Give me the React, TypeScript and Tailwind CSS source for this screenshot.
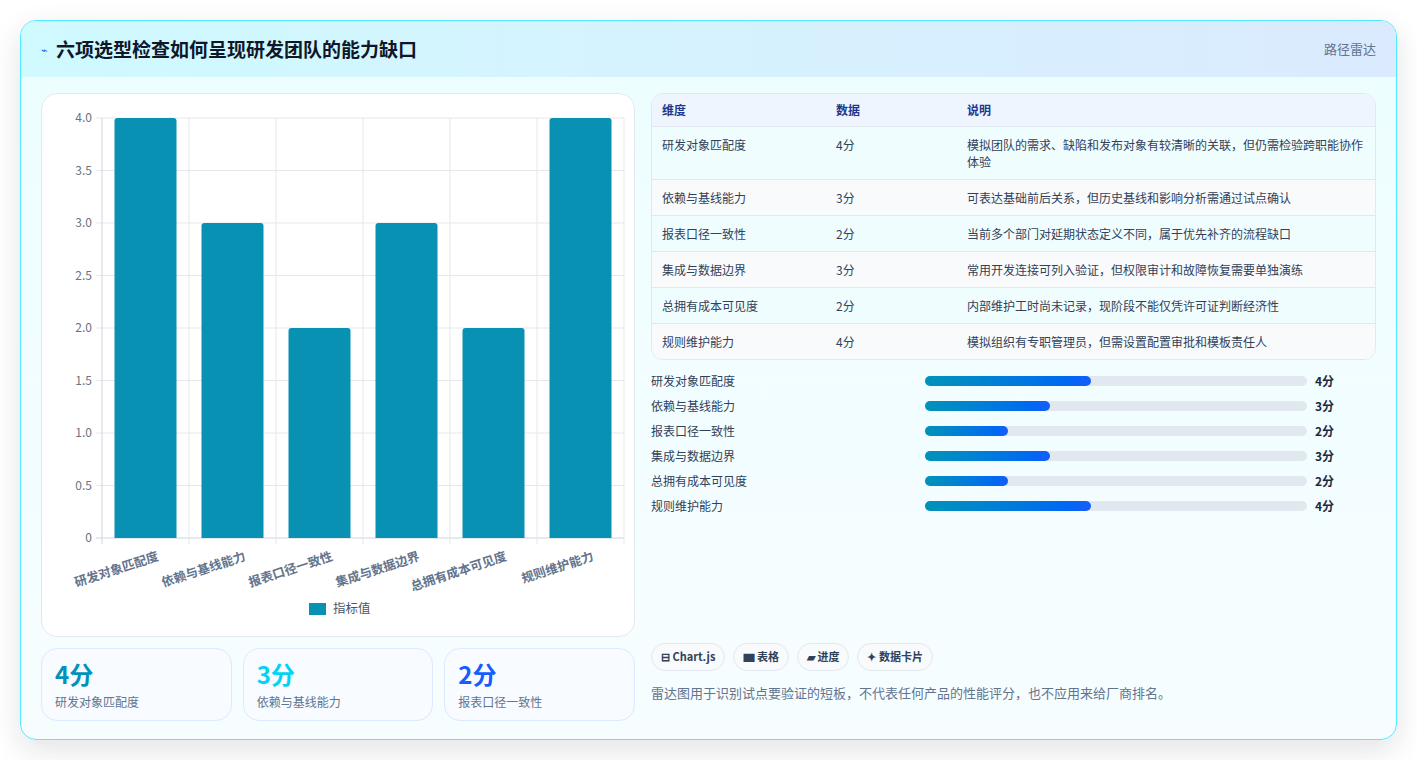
const rows = [
  { name: '研发对象匹配度', v: 4, note: '模拟团队的需求、缺陷和发布对象有较清晰的关联，但仍需检验跨职能协作体验' },
  { name: '依赖与基线能力', v: 3, note: '可表达基础前后关系，但历史基线和影响分析需通过试点确认' },
  { name: '报表口径一致性', v: 2, note: '当前多个部门对延期状态定义不同，属于优先补齐的流程缺口' },
  { name: '集成与数据边界', v: 3, note: '常用开发连接可列入验证，但权限审计和故障恢复需要单独演练' },
  { name: '总拥有成本可见度', v: 2, note: '内部维护工时尚未记录，现阶段不能仅凭许可证判断经济性' },
  { name: '规则维护能力', v: 4, note: '模拟组织有专职管理员，但需设置配置审批和模板责任人' },
];

const barWidths: Record<number, string> = { 4: '43.5%', 3: '32.7%', 2: '21.8%' };

function BarChart() {
  const left = 60, top = 24, bottom = 444, right = 582;
  const cw = (right - left) / 6;
  const ticks = [0, 0.5, 1, 1.5, 2, 2.5, 3, 3.5, 4];
  const y = (v: number) => bottom - (v / 4) * (bottom - top);
  return (
    <svg width="594" height="544" className="block" style={{ fontFamily: '"Noto Sans CJK SC", sans-serif' }}>
      {ticks.map((t) => (
        <g key={t}>
          <line x1={left - 6} x2={right} y1={y(t)} y2={y(t)} stroke={t === 0 ? '#cbd5e1' : '#e5e7eb'} />
          <text x={left - 10} y={y(t) + 4} textAnchor="end" fontSize="12" fill="#6b7280">
            {t === 0 ? '0' : t.toFixed(1)}
          </text>
        </g>
      ))}
      {Array.from({ length: 7 }).map((_, i) => (
        <line key={i} x1={left + i * cw} x2={left + i * cw} y1={top} y2={bottom + 6} stroke={i === 0 ? '#cbd5e1' : '#e5e7eb'} />
      ))}
      {rows.map((r, i) => {
        const cx = left + i * cw + cw / 2;
        return (
          <g key={r.name}>
            <path
              d={`M${cx - 31} ${bottom} V${y(r.v) + 3} Q${cx - 31} ${y(r.v)} ${cx - 28} ${y(r.v)} H${cx + 28} Q${cx + 31} ${y(r.v)} ${cx + 31} ${y(r.v) + 3} V${bottom} Z`}
              fill="#0891b2"
            />
            <text
              x={cx + 14}
              y={bottom + 22}
              textAnchor="end"
              fontSize="12.5"
              fontWeight="600"
              fill="#64748b"
              transform={`rotate(-18 ${cx + 14} ${bottom + 22})`}
            >
              {r.name}
            </text>
          </g>
        );
      })}
      <rect x="267" y="509" width="17" height="12" fill="#0891b2" />
      <text x="291" y="519" fontSize="12.5" fill="#4b5563">指标值</text>
    </svg>
  );
}

export default function App() {
  return (
    <div className="w-[1417px] h-[760px] bg-white p-5" style={{ fontFamily: '"Noto Sans CJK SC", "Noto Sans", sans-serif' }}>
      <div className="h-[720px] rounded-2xl border border-cyan-300 overflow-hidden shadow-[0_10px_30px_rgba(15,23,42,0.12)] bg-gradient-to-b from-[#ecfeff] to-[#f7fdff] flex flex-col">
        <div className="h-[56px] shrink-0 flex items-center justify-between px-5 bg-gradient-to-r from-[#cffafe] to-[#dbeafe]">
          <div className="flex items-center gap-2">
            <span className="text-[11px] text-blue-600">⌁</span>
            <h1 className="text-[19px] font-bold text-slate-900">六项选型检查如何呈现研发团队的能力缺口</h1>
          </div>
          <span className="text-[13px] text-slate-500 pr-0">路径雷达</span>
        </div>
        <div className="flex gap-4 px-5 pt-4">
          <div className="w-[594px] shrink-0 flex flex-col gap-[11px]">
            <div className="h-[544px] rounded-2xl border border-slate-200 bg-white">
              <BarChart />
            </div>
            <div className="grid grid-cols-3 gap-[11px]">
              {[
                ['4分', '研发对象匹配度', 'text-cyan-600'],
                ['3分', '依赖与基线能力', 'text-cyan-400'],
                ['2分', '报表口径一致性', 'text-blue-600'],
              ].map(([v, l, c]) => (
                <div key={l} className="h-[73px] rounded-2xl border border-blue-100 bg-[#f8fbff] px-[13px] pt-[10px]">
                  <div className={`text-[24px] leading-[30px] font-bold ${c}`}>{v}</div>
                  <div className="text-[12px] text-slate-500 mt-1">{l}</div>
                </div>
              ))}
            </div>
          </div>
          <div className="flex-1 flex flex-col">
            <div className="rounded-xl border border-slate-200 overflow-hidden text-[12px] text-slate-700">
              <div className="flex h-[33px] items-center bg-[#eef5ff] text-blue-900 font-semibold border-b border-slate-200">
                <div className="w-[184px] pl-[10px]">维度</div>
                <div className="w-[131px]">数据</div>
                <div className="flex-1">说明</div>
              </div>
              {rows.map((r, i) => (
                <div key={r.name} className={`flex py-[9px] leading-[17px] ${i % 2 === 0 ? 'bg-[#f0fdff]' : 'bg-[#f8fafc]'} ${i < 5 ? 'border-b border-slate-200' : ''}`}>
                  <div className="w-[184px] pl-[10px]">{r.name}</div>
                  <div className="w-[131px]">{r.v}分</div>
                  <div className="flex-1 pr-3">{r.note}</div>
                </div>
              ))}
            </div>
            <div className="mt-[12px] flex flex-col gap-[7px]">
              {rows.map((r) => (
                <div key={r.name} className="flex items-center h-[18px] text-[12px]">
                  <div className="w-[274px] text-slate-700">{r.name}</div>
                  <div className="w-[382px] h-[10px] rounded-full bg-slate-200">
                    <div className="h-full rounded-full bg-gradient-to-r from-cyan-600 to-blue-600" style={{ width: barWidths[r.v] }} />
                  </div>
                  <div className="ml-2 font-bold text-slate-800">{r.v}分</div>
                </div>
              ))}
            </div>
            <div className="mt-auto flex gap-2">
              {['⊟ Chart.js', '▆ 表格', '▰ 进度', '✦ 数据卡片'].map((t) => (
                <span key={t} className="h-[28px] flex items-center px-[9px] rounded-full border border-slate-200 bg-slate-50 text-[11px] font-semibold text-slate-700">{t}</span>
              ))}
            </div>
            <p className="mt-[12px] mb-[19px] text-[13px] text-slate-500">雷达图用于识别试点要验证的短板，不代表任何产品的性能评分，也不应用来给厂商排名。</p>
          </div>
        </div>
      </div>
    </div>
  );
}
